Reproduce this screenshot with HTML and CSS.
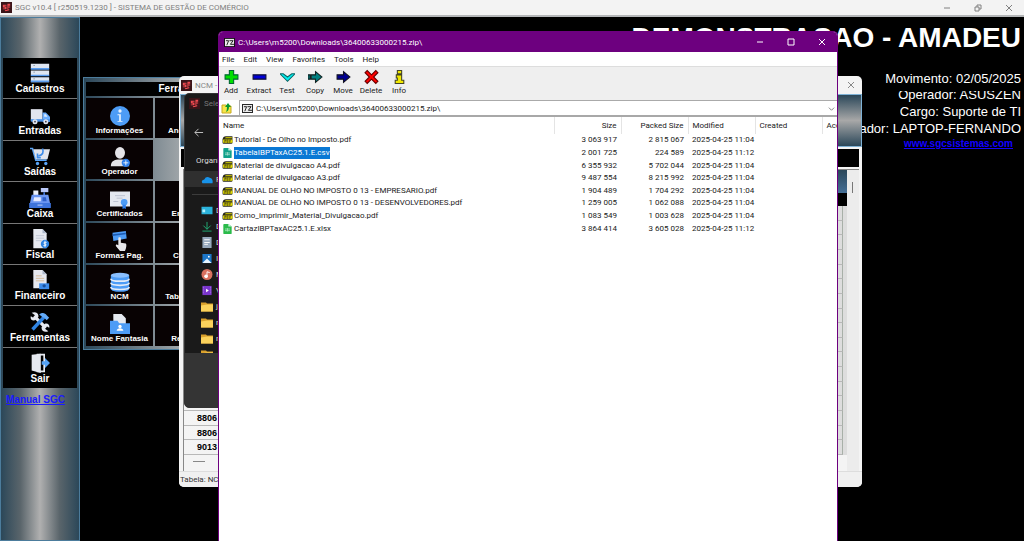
FILE: index.html
```html
<!DOCTYPE html>
<html lang="pt-BR">
<head>
    <meta charset="UTF-8">
    <meta name="viewport" content="width=device-width, initial-scale=1.0">
    <title>SGC v10.4</title>
    <link rel="stylesheet" href="styles.css">
</head>
<body>
    <svg class="sprite" aria-hidden="true">
        <symbol id="logo" viewBox="0 0 12 12">
            <rect width="12" height="12" fill="#3a1418"/>
            <path d="M2 3h4v1H4v1h2v3H2V7h2V6H2zM7 2h3v2H8v1h2v1H8v3H7zM4 9l5-1v1l-4 1z" fill="#f04a50"/>
        </symbol>
        <symbol id="cadastros" viewBox="0 0 24 24">
            <path d="M1 1h22v6H1zM1 9h22v6H1zM1 17h22v6H1z" fill="#dfe6f2"/>
            <path d="M1 6h22v2H1zM1 14h22v2H1zM1 21h22v2H1z" fill="#5a9df0"/>
            <path d="M4 3h2M4 11h2M4 19h2" stroke="#8899aa"/>
        </symbol>
        <symbol id="entradas" viewBox="0 0 24 24">
            <path d="M1 5h14v14H1z" fill="#e1e5ee"/>
            <path d="M15 9h4l5 5v6h-9z" fill="#6aaeff"/>
            <path d="M17 11h2l2 3h-4z" fill="#dcecff"/>
            <path d="M1 17h23v3H1z" fill="#4a92e8"/>
            <circle cx="6" cy="20" r="3" fill="#e1e5ee"/><circle cx="19" cy="20" r="3" fill="#e1e5ee"/>
            <circle cx="6" cy="20" r="1" fill="#334"/><circle cx="19" cy="20" r="1" fill="#334"/>
        </symbol>
        <symbol id="saidas" viewBox="0 0 24 24">
            <path d="M0 3h3l4 14h13" fill="none" stroke="#5aa4f6" stroke-width="2"/>
            <path d="M4 4h20l-3 12H7z" fill="#e1e5ee"/>
            <path d="M15 3c2 5 0 8-5 9" fill="none" stroke="#3c8bea" stroke-width="2"/>
            <path d="M9 9v5h4" fill="none" stroke="#3c8bea" stroke-width="2"/>
            <circle cx="9" cy="21" r="2" fill="#5aa4f6"/><circle cx="19" cy="21" r="2" fill="#5aa4f6"/>
        </symbol>
        <symbol id="caixa" viewBox="0 0 26 24">
            <path d="M14 0h9v5h-9z" fill="#b9c8f8"/><path d="M17 5h2v4h-2z" fill="#3f74d8"/>
            <path d="M5 3h6v6H5z" fill="#eef1fa"/>
            <path d="M3 8h20l2 10H1z" fill="#6b96f2"/>
            <path d="M6 11h8v5H5z" fill="#e6ebff"/><path d="M16 11h4l1 5h-5z" fill="#2e5fc8"/>
            <path d="M0 18h26v6H0z" fill="#3e74dc"/><path d="M10 20h6v1h-6z" fill="#d9e3ff"/>
        </symbol>
        <symbol id="fiscal" viewBox="0 0 24 24">
            <path d="M4 0h11l5 5v18H4z" fill="#e6e9f0"/><path d="M15 0v5h5z" fill="#aab6c8"/>
            <path d="M7 8h10M7 11h10M7 14h7" stroke="#b9c1cf"/>
            <circle cx="18" cy="18" r="5" fill="#2f84e4"/>
            <path d="M20 16h-3v2h2v2h-3M18 14v8" fill="none" stroke="#fff"/>
        </symbol>
        <symbol id="financeiro" viewBox="0 0 24 24">
            <path d="M4 0h11l5 5v17H4z" fill="#e6e9f0"/><path d="M15 0v5h5z" fill="#aab6c8"/>
            <path d="M7 7h7M7 10h10M7 13h10" stroke="#d2b58a"/>
            <path d="M11 16h12v7H11z" fill="#3c8bea"/><circle cx="17" cy="19" r="2" fill="#174f9c"/>
        </symbol>
        <symbol id="ferramentas" viewBox="0 0 24 24">
            <path d="M5 5l14 14" stroke="#e6e9f0" stroke-width="4"/>
            <path d="M2 1l4 3-2 3-3-2c-1 3 1 6 5 5l4-4c1-4-3-7-8-5zM22 23l-4-3 2-3 3 2c1-3-1-6-5-5l-4 4c-1 4 3 7 8 5z" fill="#e6e9f0"/>
            <path d="M3 21L17 6" stroke="#2f84e4" stroke-width="4"/>
            <path d="M11 3c4-3 7-2 9 1l3 3-3 3-3-3c-2 0-3-2-6-4z" fill="#63aaf8"/>
        </symbol>
        <symbol id="sair" viewBox="0 0 24 24">
            <path d="M9 2h8v20H9z" fill="none" stroke="#e6e9f0" stroke-width="2"/>
            <path d="M2 2l11-1v23L2 21z" fill="#e6e9f0"/>
            <path d="M14 10h4V6l6 6-6 6v-4h-4z" fill="#56a2f5"/>
        </symbol>
        <symbol id="info" viewBox="0 0 24 24">
            <circle cx="12" cy="12" r="12" fill="#4d9cf6"/>
            <circle cx="12" cy="6" r="2" fill="#e8f2ff"/>
            <path d="M9 10h4v8h2v1H9v-1h2v-7H9z" fill="#e8f2ff"/>
        </symbol>
        <symbol id="operador" viewBox="0 0 24 24">
            <ellipse cx="12" cy="7" rx="6" ry="7" fill="#e4e4e8"/>
            <path d="M1 23c0-6 4-8 11-8s11 2 11 8z" fill="#e4e4e8"/>
            <circle cx="19" cy="19" r="5" fill="#2f80ec"/><path d="M19 16v6M16 19h6" stroke="#fff"/>
        </symbol>
        <symbol id="certificados" viewBox="0 0 24 24">
            <path d="M0 3h24v18H0z" fill="#e4e8f0"/><path d="M6 8h12M8 11h7M4 15h6" stroke="#b4bccb"/>
            <circle cx="17" cy="16" r="4" fill="#4d9cf6"/><path d="M15 19h4v5l-2-1-2 1z" fill="#2f80ec"/>
        </symbol>
        <symbol id="formas" viewBox="0 0 24 24">
            <path d="M3 2l16-2 1 9L4 12z" fill="#4d9cf6"/><path d="M3 4l16-2v2L3 6z" fill="#1d5cb4"/>
            <path d="M10 8c2-1 3 0 3 1v5l6 1c1 1 1 4-1 9h-6l-5-6c0-2 1-2 3-1z" fill="#e8e8ec"/>
        </symbol>
        <symbol id="ncm" viewBox="0 0 24 24">
            <path d="M1 4v16c0 5 22 5 22 0V4z" fill="#4d9cf6"/>
            <ellipse cx="12" cy="4" rx="11" ry="3" fill="#8ac0ff"/>
            <path d="M1 8c0 4 22 4 22 0M1 13c0 4 22 4 22 0M1 18c0 4 22 4 22 0" fill="none" stroke="#e4ecf8" stroke-width="2"/>
        </symbol>
        <symbol id="fantasia" viewBox="0 0 24 24">
            <path d="M4 0h10l5 5v12H4z" fill="#e6e9f0"/>
            <path d="M0 8h9l2 3h13v13H0z" fill="#4d9cf6"/>
            <circle cx="12" cy="15" r="2" fill="#fff"/><path d="M8 20c0-4 8-4 8 0z" fill="#fff"/>
        </symbol>
        <symbol id="sevenzip" viewBox="0 0 12 10">
            <rect width="12" height="10" fill="#111"/><rect x="1" y="1" width="10" height="8" fill="#eee"/>
            <path d="M2 3h3L3 8M6 3h4L7 7h4" fill="none" stroke="#111"/>
        </symbol>
        <symbol id="pdf" viewBox="0 0 20 18">
            <path d="M1 8q1-6 6-6h12v12q0 2-2 2H3q-2 0-2-2z" fill="#26261a"/>
            <path d="M2 8h17v6H2z" fill="#e8e000"/><path d="M7 4h11v2H5z" fill="#e8e000"/>
            <path d="M5 14V9h2v2H5M9 9v4h2V9zM14 14V9h3M14 11h2" fill="none" stroke="#26261a"/>
        </symbol>
        <symbol id="sheet" viewBox="0 0 10 12">
            <path d="M0 1q0-1 1-1h5l4 3v8q0 1-1 1H1q-1 0-1-1z" fill="currentColor"/>
            <path d="M6 0l4 3H6z" fill="#c9f2dd"/><path d="M2 6h6M2 8h6M5 5v4" stroke="#d8f6e4" opacity=".7"/>
        </symbol>
        <symbol id="folder" viewBox="0 0 12 10">
            <path d="M0 1h5l1 1h6v8H0z" fill="#d9a02c"/><path d="M0 4l6-1h6v7H0z" fill="#fbd25c"/>
        </symbol>
    </svg>

    <header class="app-title">
        <svg class="logo"><use href="#logo"/></svg>
        <span class="app-name">SGC v10.4 [ r250519.1230 ] - SISTEMA DE GESTÃO DE COMÉRCIO</span>
        <div class="win-buttons app-buttons">
            <button type="button" aria-label="Minimizar"><svg viewBox="0 0 8 8"><path d="M1 4h6"/></svg></button>
            <button type="button" aria-label="Restaurar"><svg viewBox="0 0 8 8"><path d="M1 3h4v4H1zM3 3V1h4v4H5"/></svg></button>
            <button type="button" aria-label="Fechar"><svg viewBox="0 0 8 8"><path d="M1 1l6 6M7 1L1 7"/></svg></button>
        </div>
    </header>

    <main class="desktop">
        <nav class="sidebar">
            <div class="sidebar-menu">
                <button type="button"><svg><use href="#cadastros"/></svg>Cadastros</button>
                <button type="button"><svg><use href="#entradas"/></svg>Entradas</button>
                <button type="button"><svg><use href="#saidas"/></svg>Saídas</button>
                <button type="button"><svg><use href="#caixa"/></svg>Caixa</button>
                <button type="button"><svg><use href="#fiscal"/></svg>Fiscal</button>
                <button type="button"><svg><use href="#financeiro"/></svg>Financeiro</button>
                <button type="button"><svg><use href="#ferramentas"/></svg>Ferramentas</button>
                <button type="button"><svg><use href="#sair"/></svg>Sair</button>
            </div>
            <a class="manual" href="#">Manual SGC</a>
        </nav>

        <section class="company">
            <h1>DEMONSTRACAO - AMADEU</h1>
            <p>Movimento: 02/05/2025</p>
            <p class="cut">Operador: ASUSZEN</p>
            <p>Cargo: Suporte de TI</p>
            <p>Computador: LAPTOP-FERNANDO</p>
            <a href="#">www.sgcsistemas.com</a>
        </section>

        <section class="tools">
            <h2>Ferramentas</h2>
            <div class="tools-grid">
                <button type="button"><svg><use href="#info"/></svg>Informações</button>
                <button type="button"><svg><use href="#operador"/></svg>Operador</button>
                <button type="button"><svg><use href="#certificados"/></svg>Certificados</button>
                <button type="button"><svg><use href="#formas"/></svg>Formas Pag.</button>
                <button type="button"><svg><use href="#ncm"/></svg>NCM</button>
                <button type="button"><svg><use href="#fantasia"/></svg>Nome Fantasia</button>
                <button type="button"><svg></svg>Anotações</button>
                <span></span>
                <button type="button"><svg></svg>Entidade</button>
                <button type="button"><svg><use href="#info"/></svg>Cidades</button>
                <button type="button"><svg><use href="#certificados"/></svg>Tab. Valores</button>
                <button type="button"><svg></svg>Relatório</button>
            </div>
        </section>

        <section class="ncm">
            <header class="ncm-title">
                <svg class="logo"><use href="#logo"/></svg>
                <span>NCM -</span>
                <div class="win-buttons"><button type="button" aria-label="Fechar"><svg viewBox="0 0 8 8"><path d="M1 1l6 6M7 1L1 7"/></svg></button></div>
            </header>
            <div class="ncm-head"></div>
            <div class="ncm-search"></div>
            <div class="ncm-body">
                <div class="ncm-list">
                    <div class="ncm-cols"></div>
                    <div class="ncm-current"></div>
                    <ul>
                        <li></li><li></li><li></li><li></li><li></li><li></li><li></li>
                        <li></li><li></li><li></li><li></li><li></li><li></li><li></li>
                        <li>8806</li><li>8806</li><li>9013</li>
                    </ul>
                    <div class="ncm-hscroll"></div>
                </div>
                <div class="ncm-vscroll"></div>
            </div>
            <footer>Tabela: NCM</footer>
        </section>

        <section class="picker">
            <header class="picker-title">
                <svg class="logo"><use href="#logo"/></svg>Selecione
            </header>
            <div class="picker-nav">
                <button type="button" aria-label="Voltar"><svg viewBox="0 0 12 12"><path d="M11 6H2M6 2L2 6l4 4"/></svg></button>
            </div>
            <div class="picker-tools">Organizar</div>
            <ul class="picker-places">
                <li class="active"><svg viewBox="0 0 12 12"><path d="M1 10q-2-3 2-4 2-4 6-2 4 1 3 6z" fill="#1893ea"/></svg>F</li>
                <li class="split"></li>
                <li><svg viewBox="0 0 12 12"><path d="M0 2h12v8H0z" fill="#2bb3dc"/><path d="M1 5h3v3H1z" fill="#b6f1ff"/></svg>D</li>
                <li><svg viewBox="0 0 12 12"><path d="M6 1v8M2 5l4 4 4-4M1 11h10" fill="none" stroke="#21b47a" stroke-width="1"/></svg>D</li>
                <li><svg viewBox="0 0 12 12"><path d="M1 0h10v12H1z" fill="#97a9bd"/><path d="M3 3h6M3 6h6M3 8h4" stroke="#fff"/></svg>D</li>
                <li><svg viewBox="0 0 12 12"><path d="M1 1h10v10H1z" fill="#1c76c8"/><path d="M1 11l5-5 5 5z" fill="#e6f5ff"/><circle cx="8" cy="4" r="1" fill="#fff"/></svg>I</li>
                <li><svg viewBox="0 0 12 12"><circle cx="6" cy="6" r="6" fill="#d8705f"/><path d="M6 9V3l3 1" fill="none" stroke="#fff"/><circle cx="5" cy="8" r="2" fill="#fff"/></svg>M</li>
                <li><svg viewBox="0 0 12 12"><path d="M1 1h10v10H1z" fill="#7a35cc"/><path d="M5 4l3 2-3 2z" fill="#fff"/><path d="M2 2v8M10 2v8" stroke="#b184ee" stroke-dasharray="1 1"/></svg>V</li>
                <li><svg><use href="#folder"/></svg>j</li>
                <li><svg><use href="#folder"/></svg>n</li>
                <li><svg><use href="#folder"/></svg>n</li>
                <li><svg><use href="#folder"/></svg></li>
            </ul>
            <div class="picker-foot"></div>
        </section>

        <section class="zip">
            <header class="zip-title">
                <svg class="zip-logo"><use href="#sevenzip"/></svg>
                <span>C:\Users\m5200\Downloads\36400633000215.zip\</span>
                <div class="win-buttons">
                    <button type="button" aria-label="Minimize"><svg viewBox="0 0 8 8"><path d="M1 4h6"/></svg></button>
                    <button type="button" aria-label="Maximize"><svg viewBox="0 0 8 8"><path d="M1 1h6v6H1z"/></svg></button>
                    <button type="button" aria-label="Close"><svg viewBox="0 0 8 8"><path d="M1 1l6 6M7 1L1 7"/></svg></button>
                </div>
            </header>
            <nav class="zip-menu">
                <button type="button">File</button>
                <button type="button">Edit</button>
                <button type="button">View</button>
                <button type="button">Favorites</button>
                <button type="button">Tools</button>
                <button type="button">Help</button>
            </nav>
            <div class="zip-toolbar">
                <button type="button"><svg viewBox="0 0 14 14"><path d="M5 1h4v4h4v4H9v4H5V9H1V5h4z" fill="#00e000" stroke="#063"/></svg>Add</button>
                <button type="button"><svg viewBox="0 0 14 14"><path d="M1 5h12v4H1z" fill="#0000d8" stroke="#113"/></svg>Extract</button>
                <button type="button"><svg viewBox="0 0 14 14"><path d="M0 4h3l4 3 4-3h3l-7 7z" fill="#00f0f0" stroke="#166"/></svg>Test</button>
                <button type="button"><svg viewBox="0 0 14 14"><path d="M0 5h2v4H0zM3 5h4V2l6 5-6 5V9H3z" fill="#008080" stroke="#122"/></svg>Copy</button>
                <button type="button"><svg viewBox="0 0 14 14"><path d="M1 5h6V2l6 5-6 5V9H1z" fill="#000090" stroke="#112"/></svg>Move</button>
                <button type="button"><svg viewBox="0 0 14 14"><path d="M1 3l2-2 4 4 4-4 2 2-4 4 4 4-2 2-4-4-4 4-2-2 4-4z" fill="#f00" stroke="#600"/></svg>Delete</button>
                <button type="button"><svg viewBox="0 0 14 14"><path d="M5 1h4v3H5zM4 5h5v5h2v3H3v-3h2V8H4z" fill="#f0e800" stroke="#442"/></svg>Info</button>
            </div>
            <div class="zip-address">
                <button type="button" class="up" aria-label="Up one level"><svg viewBox="0 0 12 12"><path d="M1 3h4l1 1h4v7H1z" fill="#f6e64a" stroke="#c8a820"/><path d="M5 10q3-1 3-5h2L7 1 4 5h2q0 3-1 5z" fill="#0a9a30"/></svg></button>
                <label class="path">
                    <svg class="zip-logo"><use href="#sevenzip"/></svg>
                    <select aria-label="Address"><option>C:\Users\m5200\Downloads\36400633000215.zip\</option></select>
                    <svg class="chevron" viewBox="0 0 8 8"><path d="M1 3l3 3 3-3"/></svg>
                </label>
            </div>
            <table class="files">
                <colgroup><col><col class="c"><col class="c"><col class="c"><col class="c"><col class="last"></colgroup>
                <thead>
                    <tr><th>Name</th><th class="num">Size</th><th class="num">Packed Size</th><th>Modified</th><th>Created</th><th>Acc</th></tr>
                </thead>
                <tbody>
                    <tr><td><svg><use href="#pdf"/></svg><span>Tutorial - De Olho no Imposto.pdf</span></td><td class="num">3 063 917</td><td class="num">2 815 067</td><td>2025-04-25 11:04</td><td></td><td></td></tr>
                    <tr class="selected"><td><svg class="csv"><use href="#sheet"/></svg><span>TabelaIBPTaxAC25.1.E.csv</span></td><td class="num">2 001 725</td><td class="num">224 589</td><td>2025-04-25 11:12</td><td></td><td></td></tr>
                    <tr><td><svg><use href="#pdf"/></svg><span>Material de divulgacao A4.pdf</span></td><td class="num">6 355 932</td><td class="num">5 702 044</td><td>2025-04-25 11:04</td><td></td><td></td></tr>
                    <tr><td><svg><use href="#pdf"/></svg><span>Material de divulgacao A3.pdf</span></td><td class="num">9 487 554</td><td class="num">8 215 992</td><td>2025-04-25 11:04</td><td></td><td></td></tr>
                    <tr><td><svg><use href="#pdf"/></svg><span>MANUAL DE OLHO NO IMPOSTO 0 13 - EMPRESARIO.pdf</span></td><td class="num">1 904 489</td><td class="num">1 704 292</td><td>2025-04-25 11:04</td><td></td><td></td></tr>
                    <tr><td><svg><use href="#pdf"/></svg><span>MANUAL DE OLHO NO IMPOSTO 0 13 - DESENVOLVEDORES.pdf</span></td><td class="num">1 259 005</td><td class="num">1 062 088</td><td>2025-04-25 11:04</td><td></td><td></td></tr>
                    <tr><td><svg><use href="#pdf"/></svg><span>Como_imprimir_Material_Divulgacao.pdf</span></td><td class="num">1 083 549</td><td class="num">1 003 628</td><td>2025-04-25 11:04</td><td></td><td></td></tr>
                    <tr><td><svg class="xlsx"><use href="#sheet"/></svg><span>CartazIBPTaxAC25.1.E.xlsx</span></td><td class="num">3 864 414</td><td class="num">3 605 028</td><td>2025-04-25 11:12</td><td></td><td></td></tr>
                </tbody>
            </table>
        </section>
    </main>
</body>
</html>
```
FILE: styles.css
```css
* {
    box-sizing: border-box;
}

body {
    margin: 0;
    height: 100vh;
    display: flex;
    flex-direction: column;
    overflow: hidden;
    background: #000;
    font-family: Roboto, "Open Sans", sans-serif;
    font-size: 8px;
}

button {
    margin: 0;
    padding: 0;
    border: 0;
    background: none;
    color: inherit;
    font: inherit;
}

ul {
    margin: 0;
    padding: 0;
    list-style: none;
}

.sprite {
    position: absolute;
    width: 0;
    height: 0;
}

.logo {
    width: 11px;
    height: 11px;
    flex: none;
}

.win-buttons {
    display: flex;
    margin-left: auto;
}

.win-buttons button {
    width: 31px;
    display: flex;
    justify-content: center;
    align-items: center;
}

.win-buttons svg {
    width: 8px;
    height: 8px;
    fill: none;
    stroke: currentColor;
}

/* main window */
.app-title {
    display: flex;
    align-items: center;
    flex: none;
    height: 17px;
    padding-left: 1px;
    gap: 3px;
    background: #f3f3f3;
    border-bottom: 2px solid #b4b6b8;
    color: #808080;
}

.desktop {
    flex: 1;
    display: flex;
    justify-content: space-between;
    min-height: 0;
}

.sidebar {
    width: 80px;
    padding: 40px 2px 0;
    border: 1px solid #4c7c9c;
    background: linear-gradient(90deg, #2b4759, #5a656b 25%, #b0b0b0 50%, #5a656b 75%, #2b4759);
    font-family: "Liberation Sans", Arial, sans-serif;
    font-weight: bold;
}

.sidebar-menu {
    display: grid;
    grid-template-rows: repeat(8, 1fr);
    gap: 1px;
    height: 330px;
    background: #777;
}

.sidebar-menu button,
.tools-grid button {
    display: flex;
    flex-direction: column;
    align-items: center;
    justify-content: flex-end;
    background: #000;
    color: #fff;
}

.sidebar-menu button {
    padding-bottom: 4px;
    font-size: 10px;
    line-height: 11px;
}

.sidebar-menu svg {
    width: 24px;
    height: 20px;
}

.manual {
    display: block;
    margin-top: 5px;
    padding-left: 3px;
    color: #1a1aff;
    font-size: 10px;
    line-height: 14px;
}

.company {
    display: flex;
    flex-direction: column;
    align-items: flex-end;
    padding: 5px 3px 0 0;
    color: #fff;
    font-family: "Liberation Sans", Arial, sans-serif;
    white-space: nowrap;
}

.company h1 {
    margin: 0 0 16px;
    font-size: 28px;
    line-height: 32px;
}

.company p {
    margin: 0;
    height: 17px;
    overflow: hidden;
    font-size: 13px;
    line-height: 17px;
}

.company .cut {
    height: 12px;
    margin-top: 4px;
    line-height: 7px;
}

.company a {
    padding-right: 8px;
    color: #1400ff;
    font-size: 10px;
    font-weight: bold;
    line-height: 14px;
}

/* tools panel */
.tools {
    position: absolute;
    left: 83px;
    top: 77px;
    padding: 4px 2px 3px;
    border: 1px solid #4c7c9c;
    background: linear-gradient(90deg, #2b4759, #a4a9ac 48%, #2b4759);
    font-family: "Liberation Sans", Arial, sans-serif;
    color: #fff;
}

.tools h2 {
    margin: 0 0 2px;
    background: #000;
    font-size: 10px;
    line-height: 14px;
    text-align: center;
}

.tools-grid {
    display: grid;
    grid-auto-flow: column;
    grid-template-columns: repeat(3, 67px);
    grid-template-rows: repeat(6, 1fr);
    gap: 2px;
    height: 248px;
}

.tools-grid button {
    padding-bottom: 2px;
    background: #080203;
    font-size: 8px;
    font-weight: bold;
    line-height: 10px;
    white-space: nowrap;
}

.tools-grid svg {
    width: 20px;
    height: 20px;
}

/* NCM window */
.ncm {
    position: absolute;
    left: 179px;
    right: 162px;
    top: 76px;
    display: flex;
    flex-direction: column;
    height: 411px;
    overflow: hidden;
    border-radius: 5px;
    background: #f4f4f4;
}

.ncm-title {
    display: flex;
    align-items: center;
    height: 18px;
    padding-left: 2px;
    gap: 3px;
    color: #888;
}

.ncm-title .win-buttons button {
    width: 23px;
}

.ncm-head {
    height: 53px;
    margin-left: 1px;
    border: 1px solid #7fb2d6;
    background: linear-gradient(#2b4759, #a8a8a8 50%, #2b4759);
}

.ncm-search {
    height: 18px;
    margin: 2px 3px 2px 2px;
    background: #000;
}

.ncm-body {
    flex: 1;
    display: flex;
    margin: 0 3px 0 4px;
    border-left: 1px solid #888;
    border-top: 1px solid #888;
}

.ncm-list {
    flex: 1;
}

.ncm-cols {
    height: 23px;
    background: linear-gradient(#2b4759, #456f96);
}

.ncm-current {
    height: 13px;
    background: #000;
}

.ncm-list ul {
    display: grid;
    grid-auto-rows: 1fr;
    height: 249px;
    background: linear-gradient(90deg, #f4f4f4, #ddd);
    font-family: "Liberation Sans", Arial, sans-serif;
    font-size: 9px;
    font-weight: bold;
}

.ncm-list li {
    display: flex;
    align-items: center;
    margin-right: 4px;
    padding-left: 13px;
    border-bottom: 1px solid #b8b8b8;
    border-right: 1px solid #a8b0a8;
}

.ncm-hscroll {
    width: 12px;
    margin: 6px 0 0 9px;
    border-top: 1px solid #888;
}

.ncm-vscroll {
    width: 12px;
    padding: 12px 0 0 5px;
    background: #ececec;
}

.ncm-vscroll::before {
    content: "";
    display: block;
    height: 11px;
    border-left: 1px solid #777;
}

.ncm footer {
    height: 16px;
    padding-left: 1px;
    border-top: 1px solid #ddd;
    background: #f0f0f0;
    color: #333;
    line-height: 15px;
}

/* file picker */
.picker {
    position: absolute;
    left: 184px;
    top: 93px;
    width: 500px;
    height: 315px;
    display: flex;
    flex-direction: column;
    overflow: hidden;
    border: 1px solid #333;
    border-radius: 5px;
    background: #1a1a1a;
    color: #ddd;
}

.picker-title {
    display: flex;
    align-items: center;
    height: 19px;
    padding-left: 4px;
    gap: 4px;
    color: #777;
}

.picker-nav {
    display: flex;
    align-items: center;
    height: 38px;
    padding-left: 8px;
}

.picker-nav svg {
    display: block;
    width: 11px;
    height: 11px;
    fill: none;
    stroke: #ccc;
}

.picker-tools {
    height: 20px;
    padding-left: 11px;
    line-height: 19px;
}

.picker-places {
    flex: 1;
    overflow: hidden;
}

.picker-places li {
    display: flex;
    align-items: center;
    height: 16px;
    padding-left: 16px;
    gap: 3px;
}

.picker-places .active {
    background: #2f2f2f;
}

.picker-places .split {
    margin: 7px;
    height: 1px;
    background: #3c3c3c;
}

.picker-places svg {
    width: 12px;
    height: 11px;
}

.picker-foot {
    height: 54px;
    background: #343434;
}

/* 7-Zip window */
.zip {
    position: absolute;
    left: 218px;
    right: 186px;
    top: 31px;
    bottom: 0;
    overflow: hidden;
    border: 1px solid #6d007f;
    border-bottom: 0;
    border-radius: 5px 5px 0 0;
    background: #fff;
    color: #222;
}

.zip-title {
    display: flex;
    align-items: center;
    height: 20px;
    padding-left: 5px;
    gap: 3px;
    background: #6d007f;
    color: #fff;
}

.zip-logo {
    width: 11px;
    height: 9px;
    flex: none;
}

.zip-menu {
    display: flex;
    height: 14px;
    padding-left: 3px;
    gap: 9px;
}

.zip-toolbar {
    display: flex;
    height: 34px;
    margin-left: -2px;
    padding-top: 2px;
    border-top: 1px solid #ddd;
    background: #efefef;
}

.zip-toolbar button {
    width: 28px;
    display: flex;
    flex-direction: column;
    align-items: center;
    line-height: 12px;
}

.zip-toolbar svg {
    width: 15px;
    height: 16px;
}

.zip-address {
    display: flex;
    height: 17px;
    border-bottom: 2px solid #a8a8a8;
}

.up {
    width: 20px;
    padding-left: 2px;
}

.up svg {
    display: block;
    width: 12px;
    height: 12px;
}

.path {
    flex: 1;
    display: flex;
    align-items: center;
    padding: 0 2px;
    border: 1px solid #aaa;
    border-bottom: 0;
    border-right: 0;
}

.path select {
    flex: 1;
    appearance: none;
    padding: 0 0 0 3px;
    border: 0;
    background: none;
    color: inherit;
    font: inherit;
}

.chevron {
    width: 7px;
    height: 7px;
    fill: none;
    stroke: #777;
}

.files {
    width: 100%;
    height: 118px;
    table-layout: fixed;
    border-collapse: collapse;
    white-space: nowrap;
}

.files .c {
    width: 67px;
}

.files .last {
    width: 15px;
}

.files th,
.files td {
    padding: 0 4px;
    overflow: hidden;
    font-weight: normal;
    text-align: left;
    line-height: 12px;
}

.files th {
    height: 17px;
    border-right: 1px solid #e4e4e4;
}

.files td:first-child {
    padding-left: 3px;
}

.files th:last-child {
    border-right: 0;
}

.files .num {
    text-align: right;
}

.files svg {
    width: 11px;
    height: 10px;
    margin-right: 1px;
    vertical-align: middle;
}

.files .csv {
    color: #12a18a;
}

.files .xlsx {
    color: #2cbb4c;
}

.selected span {
    display: inline-block;
    background: #0a78d4;
    color: #fff;
}
```
